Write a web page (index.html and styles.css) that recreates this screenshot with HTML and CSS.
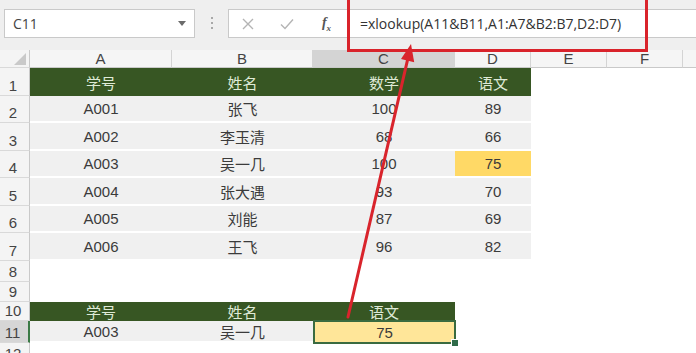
FILE: index.html
```html
<!DOCTYPE html>
<html lang="zh-CN">
<head>
<meta charset="utf-8">
<title>xlookup</title>
<link rel="stylesheet" href="styles.css">
</head>
<body>
<div class="toolbar">
  <div class="namebox"><span>C11</span><svg class="dd" width="8" height="5" viewBox="0 0 8 5"><path d="M0 0H8L4 5Z" fill="#6b6b6b"/></svg></div>
  <div class="dots"><span class="dot"></span><span class="dot"></span><span class="dot"></span></div>
  <div class="fbar">
    <span class="fbtn b1"><svg width="12" height="12" viewBox="0 0 12 12"><path d="M1 1L11 11M11 1L1 11" stroke="#b4b4b4" stroke-width="1.4" fill="none"/></svg></span>
    <span class="fbtn b2"><svg width="14" height="12" viewBox="0 0 14 12"><path d="M1 6.5L5 10.5L13 1.5" stroke="#b4b4b4" stroke-width="1.4" fill="none"/></svg></span>
    <span class="fbtn b3"><i class="fx">f<sub>x</sub></i></span>
    <span class="formula">=xlookup(A11&amp;B11,A1:A7&amp;B2:B7,D2:D7)</span>
  </div>
</div>

<div class="sheet">
  <div class="row hdr">
    <div class="rh corner"><svg width="12" height="12" viewBox="0 0 12 12"><path d="M12 0V12H0Z" fill="#c9c9c9"/></svg></div>
    <div class="ch ca">A</div><div class="ch cb">B</div><div class="ch cc sel">C</div><div class="ch cd">D</div><div class="ch ce">E</div><div class="ch cf">F</div><div class="ch rest"></div>
  </div>
  <div class="row big">
    <div class="rh">1</div>
    <div class="cell ca th">学号</div><div class="cell cb th">姓名</div><div class="cell cc th">数学</div><div class="cell cd th">语文</div>
  </div>
  <div class="row small">
    <div class="rh">2</div>
    <div class="cell ca td">A001</div><div class="cell cb td">张飞</div><div class="cell cc td">100</div><div class="cell cd td">89</div>
  </div>
  <div class="row big">
    <div class="rh">3</div>
    <div class="cell ca td">A002</div><div class="cell cb td">李玉清</div><div class="cell cc td">68</div><div class="cell cd td">66</div>
  </div>
  <div class="row small">
    <div class="rh">4</div>
    <div class="cell ca td">A003</div><div class="cell cb td">吴一几</div><div class="cell cc td">100</div><div class="cell cd td hl">75</div>
  </div>
  <div class="row big">
    <div class="rh">5</div>
    <div class="cell ca td">A004</div><div class="cell cb td">张大遇</div><div class="cell cc td">93</div><div class="cell cd td">70</div>
  </div>
  <div class="row small">
    <div class="rh">6</div>
    <div class="cell ca td">A005</div><div class="cell cb td">刘能</div><div class="cell cc td">87</div><div class="cell cd td">69</div>
  </div>
  <div class="row big">
    <div class="rh">7</div>
    <div class="cell ca td">A006</div><div class="cell cb td">王飞</div><div class="cell cc td">96</div><div class="cell cd td">82</div>
  </div>
  <div class="row r8"><div class="rh">8</div></div>
  <div class="row r9"><div class="rh">9</div></div>
  <div class="row r10">
    <div class="rh">10</div>
    <div class="cell ca th">学号</div><div class="cell cb th">姓名</div><div class="cell cc th">语文</div>
  </div>
  <div class="row r11">
    <div class="rh selrow">11</div>
    <div class="cell ca td">A003</div><div class="cell cb td">吴一几</div><div class="cell cc active">75</div>
  </div>
  <div class="row r12"><div class="rh last">12</div></div>
</div>

<div class="callout"></div>
<svg class="arrow" width="696" height="353" viewBox="0 0 696 353">
  <line x1="348" y1="317" x2="407.6" y2="59.6" stroke="#d9242c" stroke-width="3" stroke-linecap="round"/>
  <path d="M411 44L414.2 62.2L401 59Z" fill="#d9242c"/>
</svg>
</body>
</html>
```

FILE: styles.css
```css
html, body {
  margin: 0;
  padding: 0;
}
body {
  width: 696px;
  height: 353px;
  overflow: hidden;
  position: relative;
  background: #fff;
  font-family: "Liberation Sans", "Noto Sans CJK SC", sans-serif;
  color: #3b3b3b;
}

/* ---------- toolbar ---------- */
.toolbar {
  height: 50px;
  box-sizing: border-box;
  background: #efefef;
  display: flex;
  align-items: flex-start;
  padding: 9px 0 0 4px;
}
.namebox {
  width: 191px;
  height: 29px;
  box-sizing: border-box;
  background: #fff;
  border: 1px solid #c9c9c9;
  display: flex;
  align-items: center;
  justify-content: space-between;
  padding: 0 8px 0 8px;
  font-family: "Open Sans", "Liberation Sans", sans-serif;
  font-size: 14px;
  color: #444;
}
.dots {
  width: 33px;
  display: flex;
  flex-direction: column;
  align-items: center;
  gap: 3px;
  padding-top: 8px;
}
.dot {
  width: 2px;
  height: 2px;
  background: #a8a8a8;
}
.fbar {
  flex: 1;
  height: 29px;
  box-sizing: border-box;
  background: #fff;
  border: 1px solid #c9c9c9;
  border-right: none;
  display: flex;
  align-items: center;
}
.fbtn {
  display: flex;
  justify-content: center;
  align-items: center;
}
.b1 { width: 37px; }
.b2 { width: 42px; }
.b3 { width: 37px; }
.fx {
  font-family: "Liberation Serif", serif;
  font-size: 14px;
  color: #555;
  font-weight: bold;
}
.fx sub {
  font-size: 9px;
}
.formula {
  margin-left: 15px;
  font-family: "Open Sans", "Liberation Sans", sans-serif;
  font-size: 14px;
  color: #333;
  white-space: nowrap;
}

/* ---------- sheet ---------- */
.sheet {
  display: flex;
  flex-direction: column;
}
.row {
  display: flex;
}
.hdr { height: 18px; }
.big { height: 28px; }
.small { height: 27px; }
.r8 { height: 21px; }
.r9 { height: 20px; }
.r10 { height: 19px; }
.r11 { height: 22px; }
.r12 { height: 10px; overflow: hidden; }

.rh {
  width: 30px;
  flex: none;
  box-sizing: border-box;
  background: #f4f4f4;
  border-right: 1px solid #c9c9c9;
  border-bottom: 1px solid #d9d9d9;
  display: flex;
  justify-content: center;
  align-items: flex-end;
  padding: 0 3px 1px 0;
  font-size: 15px;
  line-height: 17px;
  color: #444;
}
.rh.last {
  align-items: flex-start;
  padding-top: 2px;
  border-bottom: none;
  overflow: hidden;
}
.corner {
  align-items: flex-end;
  justify-content: flex-end;
  padding: 0 3px 2px 0;
  background: #f4f4f4;
}
.selrow {
  background: #d6d6d6;
  border-right: 2px solid #3b7a45;
}

.ch {
  box-sizing: border-box;
  background: #f5f5f5;
  border-right: 1px solid #d4d4d4;
  border-bottom: 1px solid #c9c9c9;
  display: flex;
  justify-content: center;
  align-items: center;
  font-size: 15px;
  color: #444;
}
.ch.sel {
  background: #d4d4d4;
}
.ch.rest {
  flex: 1;
  border-right: none;
}

.ca { width: 142px; }
.cb { width: 141px; }
.cc { width: 142px; }
.cd { width: 76px; }
.ce { width: 76px; }
.cf { width: 76px; }

.cell {
  flex: none;
  box-sizing: border-box;
  display: flex;
  justify-content: center;
  align-items: center;
  font-size: 15px;
}
.th {
  background: #375623;
  color: #dfead7;
}
.td {
  background: #f0f0f0;
  border-bottom: 2px solid #fff;
  color: #3b3b3b;
}
.td.hl {
  background: #ffd966;
}
.active {
  position: relative;
  width: 143px;
  margin-top: -1px;
  height: 24px;
  background: #ffe699;
  border: 2px solid #3a6b40;
  color: #3b3b3b;
}
.active::after {
  content: "";
  position: absolute;
  right: -5px;
  bottom: -5px;
  width: 6px;
  height: 6px;
  background: #2f6b4a;
  border: 1px solid #fff;
}

/* ---------- annotation overlay ---------- */
.callout {
  position: absolute;
  left: 347px;
  top: -3px;
  width: 301px;
  height: 55px;
  box-sizing: border-box;
  border: 3px solid #d9232b;
}
.arrow {
  position: absolute;
  left: 0;
  top: 0;
  pointer-events: none;
}
```
